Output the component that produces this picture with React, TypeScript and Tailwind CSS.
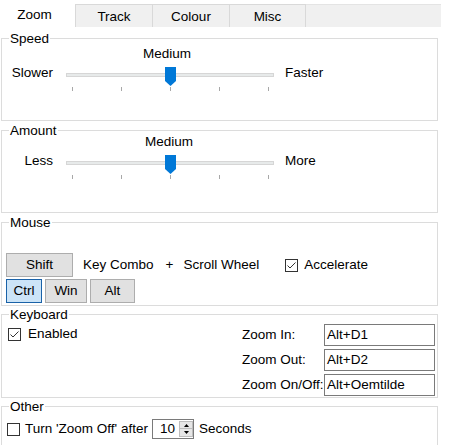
import React from "react";

function Group({ title, className, children }: { title: string; className: string; children?: React.ReactNode }) {
  return (
    <div className={`relative ml-[1px] w-[437px] border border-[#dcdcdc] ${className}`}>
      <span className="absolute -top-[8px] left-[7px] bg-white px-[1px] leading-[16px]">{title}</span>
      {children}
    </div>
  );
}

function Thumb() {
  return (
    <svg width="11" height="19" viewBox="0 0 11 19" className="absolute left-[99px] top-0">
      <path d="M0 0 H11 V14 L5.5 19 L0 14 Z" fill="#0078d7" />
    </svg>
  );
}

function Slider() {
  return (
    <div className="relative mt-[2px] ml-[13px] h-[24px] w-[208px]">
      <div className="mt-[6px] h-[4px] border border-[#d6d6d6] bg-[#e7eaea]" />
      <Thumb />
      <div className="absolute left-[6px] top-[20px] flex w-[197px] justify-between">
        <div className="h-[4px] w-px bg-[#a8a8a8]" />
        <div className="h-[4px] w-px bg-[#a8a8a8]" />
        <div className="h-[4px] w-px bg-[#a8a8a8]" />
        <div className="h-[4px] w-px bg-[#a8a8a8]" />
        <div className="h-[4px] w-px bg-[#a8a8a8]" />
      </div>
    </div>
  );
}

function Check({ checked }: { checked: boolean }) {
  return (
    <svg width="13" height="13" viewBox="0 0 13 13" className="shrink-0">
      <rect x="0.5" y="0.5" width="12" height="12" fill="#fff" stroke="#333" />
      {checked && <path d="M2.5 6.5 L5 9 L10.5 3.5" fill="none" stroke="#333" strokeWidth="1" />}
    </svg>
  );
}

function Btn({ label, w, active }: { label: string; w: string; active?: boolean }) {
  return (
    <div
      className={`flex h-[24px] items-center justify-center border ${w} ${
        active ? "border-[#1a62a8] bg-[#cce4f7]" : "border-[#adadad] bg-[#e1e1e1]"
      }`}
    >
      {label}
    </div>
  );
}

function TextBox({ value }: { value: string }) {
  return <div className="flex h-[22px] items-center border border-[#7a7a7a] pl-[2px]">{value}</div>;
}

export default function App() {
  return (
    <div className="h-[445px] w-[452px] overflow-hidden bg-white font-['Liberation_Sans',Arial,sans-serif] text-[13.5px] leading-[16px] text-black">
      {/* Tabs */}
      <div className="flex h-[27px] w-[441px]">
        <div className="w-[75px] pr-[6px] pt-[7px] text-center">Zoom</div>
        <div className="mt-[4px] h-[23px] w-[77px] border-l border-t border-[#d9d9d9] bg-[#f0f0f0] pt-[4px] text-center">Track</div>
        <div className="mt-[4px] h-[23px] w-[77px] border-l border-t border-[#d9d9d9] bg-[#f0f0f0] pt-[4px] text-center">Colour</div>
        <div className="mt-[4px] h-[23px] w-[77px] border-x border-t border-[#d9d9d9] bg-[#f0f0f0] pt-[4px] text-center">Misc</div>
        <div className="mt-[4px] h-[23px] flex-1 border-t border-[#e4e4e4] bg-[#f0f0f0]" />
      </div>

      {/* Speed */}
      <Group title="Speed" className="mt-[11px] h-[83px]">
        <div className="ml-[141px] mt-[7px]">Medium</div>
        <div className="mt-[3px] flex items-start">
          <div className="w-[51px] text-right">Slower</div>
          <Slider />
          <div className="ml-[11px]">Faster</div>
        </div>
      </Group>

      {/* Amount */}
      <Group title="Amount" className="mt-[9px] h-[83px]">
        <div className="ml-[143px] mt-[3px]">Medium</div>
        <div className="mt-[3px] flex items-start">
          <div className="w-[51px] text-right">Less</div>
          <Slider />
          <div className="ml-[11px]">More</div>
        </div>
      </Group>

      {/* Mouse */}
      <Group title="Mouse" className="mt-[9px] h-[84px]">
        <div className="mt-[30px] flex items-center pl-[4px]">
          <Btn label="Shift" w="w-[67px]" />
          <span className="ml-[10px]">Key Combo</span>
          <span className="ml-[12px]">+</span>
          <span className="ml-[10px]">Scroll Wheel</span>
          <span className="ml-[26px] flex items-center">
            <Check checked />
            <span className="ml-[6px]">Accelerate</span>
          </span>
        </div>
        <div className="mt-[2px] flex gap-[3px] pl-[4px]">
          <Btn label="Ctrl" w="w-[36px]" active />
          <Btn label="Win" w="w-[42px]" />
          <Btn label="Alt" w="w-[45px]" />
        </div>
      </Group>

      {/* Keyboard */}
      <Group title="Keyboard" className="mt-[8px] h-[84px]">
        <div className="flex">
          <div className="mt-[11px] flex h-[16px] items-center pl-[6px]">
            <Check checked />
            <span className="ml-[7px]">Enabled</span>
          </div>
          <div className="ml-auto mr-[2px] mt-[9px] grid grid-cols-[82px_111px] items-center gap-y-[3px]">
            <div>Zoom In:</div>
            <TextBox value="Alt+D1" />
            <div>Zoom Out:</div>
            <TextBox value="Alt+D2" />
            <div>Zoom On/Off:</div>
            <TextBox value="Alt+Oemtilde" />
          </div>
        </div>
      </Group>

      {/* Other */}
      <Group title="Other" className="mt-[8px] h-[60px]">
        <div className="mt-[12px] flex h-[20px] items-center pl-[5px]">
          <Check checked={false} />
          <span className="ml-[5px] w-[127px] whitespace-nowrap">Turn 'Zoom Off' after</span>
          <div className="flex h-[20px] w-[42px] items-center border border-[#7a7a7a]">
            <span className="pl-[7px]">10</span>
            <div className="ml-auto flex h-full w-[14px] flex-col justify-center gap-0">
              <div className="flex h-[8px] items-center justify-center border border-[#bdbdbd] bg-[#e6e6e6]">
                <svg width="5" height="3" viewBox="0 0 5 3">
                  <path d="M0 3 L2.5 0 L5 3 Z" fill="#000" />
                </svg>
              </div>
              <div className="flex h-[8px] items-center justify-center border border-t-0 border-[#bdbdbd] bg-[#e6e6e6]">
                <svg width="5" height="3" viewBox="0 0 5 3">
                  <path d="M0 0 L5 0 L2.5 3 Z" fill="#000" />
                </svg>
              </div>
            </div>
          </div>
          <span className="ml-[5px]">Seconds</span>
        </div>
      </Group>
    </div>
  );
}
